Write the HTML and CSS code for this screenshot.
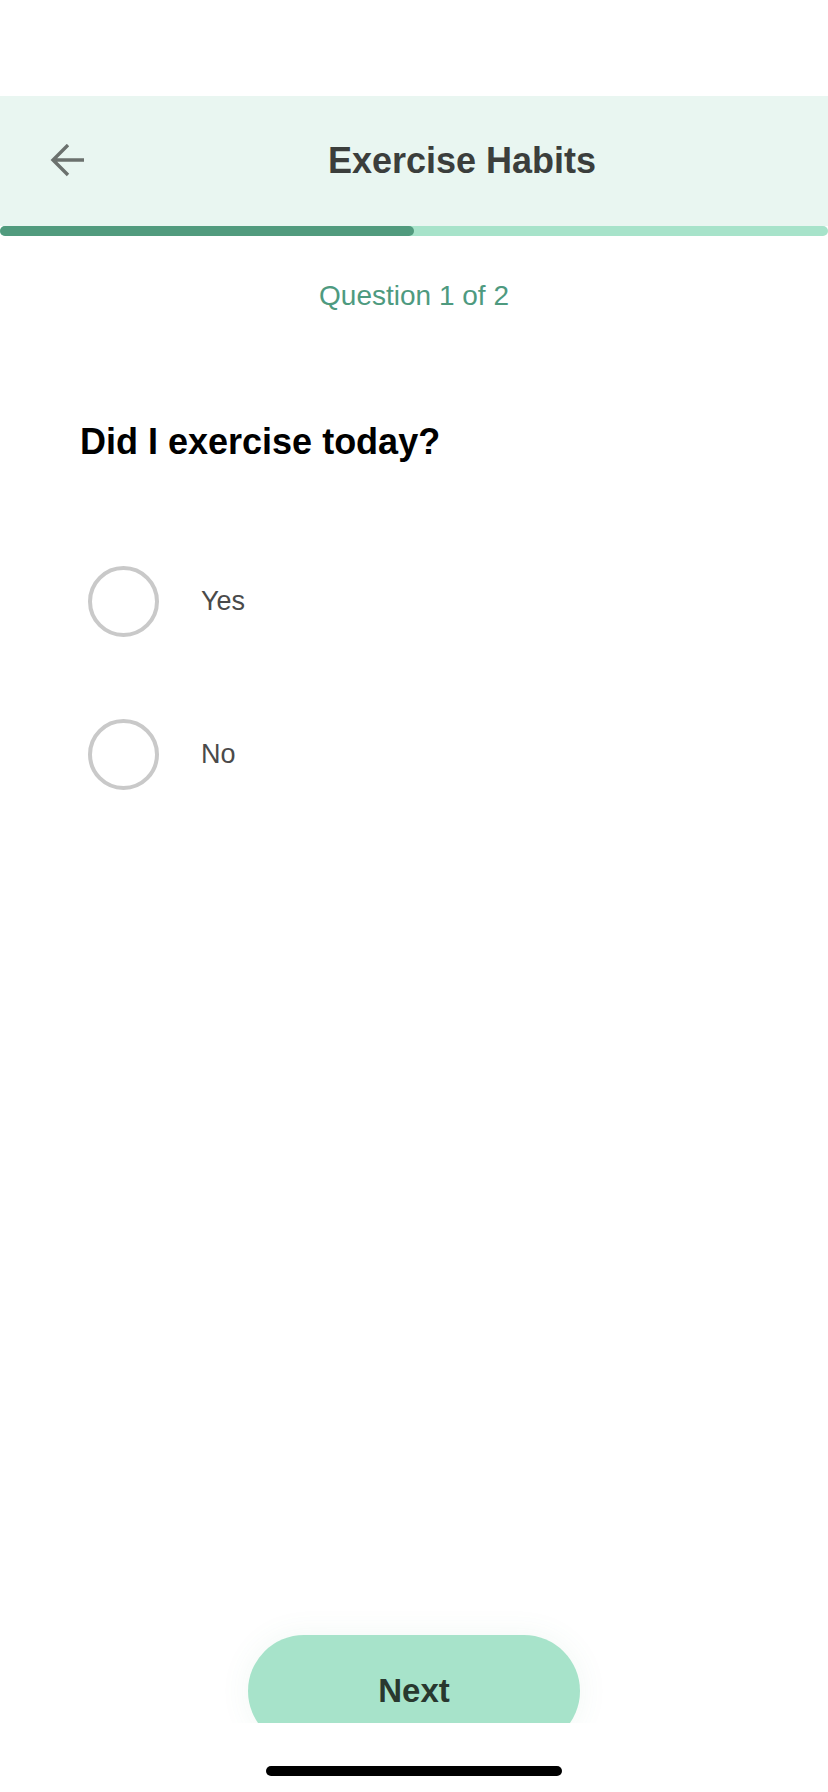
FILE: index.html
```html
<!DOCTYPE html>
<html lang="en">
<head>
    <meta charset="UTF-8">
    <meta name="viewport" content="width=device-width, initial-scale=1.0">
    <title>Exercise Habits</title>
    <link rel="stylesheet" href="styles.css">
</head>
<body>
    <div class="status-bar"></div>

    <!-- Header con titolo e freccia indietro -->
    <div class="header">
        <button class="back-button" aria-label="Back">
            <svg width="36" height="34" viewBox="0 0 36 34">
                <path d="M34 16 H3 M18 1 L3 16 L18 31" fill="none" stroke="#6b716e" stroke-width="3.4"/>
            </svg>
        </button>
        <h1 class="title">Exercise Habits</h1>
    </div>
    <div class="progress">
        <div class="progress-fill" style="width: 50%;"></div>
    </div>

    <div class="content">
        <div class="question-count">Question 1 of 2</div>
        <h2 class="question">Did I exercise today?</h2>

        <div class="options">
            <label class="option">
                <span class="radio"></span>
                <span class="option-label">Yes</span>
            </label>
            <label class="option">
                <span class="radio"></span>
                <span class="option-label">No</span>
            </label>
        </div>
    </div>

    <div class="footer">
        <button class="next-button">Next</button>
    </div>

    <div class="home-area">
        <div class="home-indicator"></div>
    </div>
</body>
</html>
```

FILE: styles.css
```css
body {
    font-family: "Liberation Sans", Arial, Helvetica, sans-serif;
    background-color: #ffffff;
    margin: 0;
    height: 1792px;
    display: flex;
    flex-direction: column;
    overflow: hidden;
}

.status-bar {
    height: 96px;
    flex-shrink: 0;
}

.header {
    height: 130px;
    background-color: #e9f6f1;
    display: flex;
    align-items: center;
    flex-shrink: 0;
}

.back-button {
    width: 96px;
    height: 100%;
    padding: 0 0 0 50px;
    border: none;
    background: none;
    display: flex;
    align-items: center;
}

.title {
    flex: 1;
    margin: 0;
    text-align: center;
    font-size: 36px;
    line-height: 1.15;
    font-weight: bold;
    color: #3b3e3c;
}

.progress {
    height: 10px;
    background-color: #a7e3ca;
    border-radius: 5px;
    flex-shrink: 0;
}

.progress-fill {
    height: 100%;
    background-color: #519b7e;
    border-radius: 5px;
}

.content {
    flex: 1;
    padding: 43px 0 0 80px;
}

.question-count {
    font-size: 28px;
    line-height: 34px;
    color: #4e9a7f;
    text-align: center;
    margin-left: -80px;
}

.question {
    margin: 108px 0 0 0;
    font-size: 36px;
    line-height: 42px;
    font-weight: bold;
    color: #000000;
}

.options {
    margin-top: 103px;
    padding-left: 8px;
    display: flex;
    flex-direction: column;
    gap: 82px;
}

.option {
    display: flex;
    align-items: center;
    gap: 42px;
    height: 71px;
}

.radio {
    width: 71px;
    height: 71px;
    box-sizing: border-box;
    border: 4px solid #c9c9c9;
    border-radius: 50%;
}

.option-label {
    font-size: 27px;
    color: #4a4a4a;
}

.footer {
    height: 113px;
    flex-shrink: 0;
    overflow: hidden;
    display: flex;
    justify-content: center;
    padding-top: 25px;
    box-sizing: border-box;
}

.next-button {
    width: 332px;
    height: 112px;
    border: none;
    border-radius: 56px;
    background-color: #a7e3ca;
    color: #29382f;
    font-family: "Liberation Sans", Arial, sans-serif;
    font-size: 33px;
    font-weight: bold;
    box-shadow: 0 0 30px rgba(80, 150, 120, 0.08);
}

.home-area {
    height: 69px;
    flex-shrink: 0;
    display: flex;
    justify-content: center;
}

.home-indicator {
    margin-top: 43px;
    width: 296px;
    height: 10px;
    border-radius: 5px;
    background-color: #000000;
}
```
